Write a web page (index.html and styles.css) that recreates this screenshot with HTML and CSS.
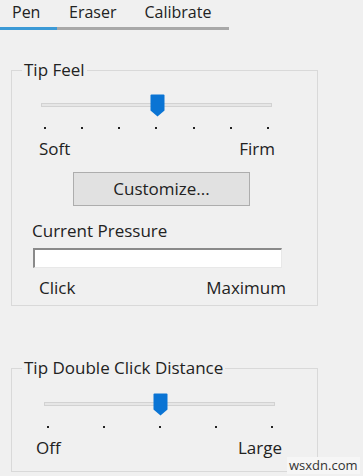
FILE: index.html
```html
<!DOCTYPE html>
<html lang="en">
<head>
  <meta charset="UTF-8" />
  <meta name="viewport" content="width=device-width, initial-scale=1.0" />
  <title>Pen</title>
  <link rel="stylesheet" href="styles.css">
</head>
<body>
  <div class="tabs">
    <span class="tab active">Pen</span>
    <span class="tab">Eraser</span>
    <span class="tab">Calibrate</span>
  </div>

  <fieldset class="group feel">
    <legend>Tip Feel</legend>

    <div class="scale">
      <div class="slider">
        <div class="track"></div>
        <svg class="thumb" width="15" height="23" viewBox="0 0 15 23">
          <path d="M1.5 0.5 H13.5 Q14.5 0.5 14.5 1.5 V16.5 L7.5 22.5 L0.5 16.5 V1.5 Q0.5 0.5 1.5 0.5 Z" fill="#0a74d4" />
        </svg>
      </div>
      <div class="ticks">
        <i></i><i></i><i></i><i></i><i></i><i></i><i></i>
      </div>
      <div class="ends">
        <span>Soft</span>
        <span>Firm</span>
      </div>
    </div>

    <button class="customize">Customize...</button>

    <div class="label">Current Pressure</div>
    <div class="meter"></div>
    <div class="ends pressure">
      <span>Click</span>
      <span>Maximum</span>
    </div>
  </fieldset>

  <fieldset class="group distance">
    <legend>Tip Double Click Distance</legend>

    <div class="scale">
      <div class="slider">
        <div class="track"></div>
        <svg class="thumb" width="15" height="23" viewBox="0 0 15 23">
          <path d="M1.5 0.5 H13.5 Q14.5 0.5 14.5 1.5 V16.5 L7.5 22.5 L0.5 16.5 V1.5 Q0.5 0.5 1.5 0.5 Z" fill="#0a74d4" />
        </svg>
      </div>
      <div class="ticks">
        <i></i><i></i><i></i><i></i><i></i>
      </div>
      <div class="ends">
        <span>Off</span>
        <span>Large</span>
      </div>
    </div>
  </fieldset>

  <div class="mark">wsxdn.com</div>
</body>
</html>
```

FILE: styles.css
```css
body {
  margin: 0;
  background-color: #f0f0f0;
  font-family: "Open Sans", Arial, sans-serif;
  font-size: 17px;
  line-height: 24px;
  color: #222;
  position: relative;
  height: 476px;
  overflow: hidden;
}

.tabs {
  display: flex;
  width: 229px;
  border-bottom: 3px solid #a8a8a8;
  font-size: 16px;
  line-height: 25px;
}
.tab {
  min-width: 57px;
  box-sizing: border-box;
  padding: 0 16px 2px 12px;
}
.tab.active {
  border-bottom: 3px solid #3c9ad6;
  margin-bottom: -3px;
}

.group {
  width: 307px;
  box-sizing: border-box;
  margin: 28px 0 0 11px;
  padding: 0;
  border: 1px solid #d9d9d9;
}
.group legend {
  margin-left: 10px;
  padding: 0 2px;
  line-height: 24px;
}
.feel {
  padding-bottom: 5px;
}
.distance {
  margin-top: 50px;
  padding-bottom: 11px;
}

.scale {
  width: 231px;
}
.feel .scale {
  margin: 12px 0 0 29px;
}
.distance .scale {
  margin: 13px 0 0 32px;
}

.slider {
  position: relative;
  height: 22px;
  display: flex;
  align-items: center;
}
.track {
  flex: 1;
  height: 2px;
  background-color: #e6e6e6;
  border: 1px solid #d2d2d2;
}
.thumb {
  position: absolute;
  top: 0;
  left: 109px;
}

.ticks {
  display: flex;
  justify-content: space-between;
  margin-top: 11px;
  padding: 0 3px;
}
.distance .ticks {
  padding: 0 2px 0 3px;
}
.ticks i {
  width: 2px;
  height: 2px;
  background-color: #222;
}

.ends {
  display: flex;
  justify-content: space-between;
  margin: 8px -3px 0 -2px;
}
.distance .ends {
  margin: 8px -7px 0 -8px;
}

.customize {
  display: block;
  width: 177px;
  height: 34px;
  margin: 11px 0 0 61px;
  padding: 0;
  font: inherit;
  color: #222;
  background-color: #e1e1e1;
  border: 1px solid #adadad;
}

.label {
  margin: 13px 0 0 20px;
}
.meter {
  width: 249px;
  height: 20px;
  box-sizing: border-box;
  margin: 5px 0 0 21px;
  background-color: #fff;
  border-top: 2px solid #8a8a8a;
  border-left: 2px solid #8a8a8a;
  border-right: 1px solid #e8e8e8;
  border-bottom: 1px solid #e8e8e8;
}
.ends.pressure {
  margin: 8px 31px 0 27px;
}

.mark {
  position: absolute;
  left: 287px;
  top: 457px;
  padding: 0 2px;
  font-size: 13px;
  line-height: 17px;
  color: #333;
  background-color: #f6f6f6;
}
```
